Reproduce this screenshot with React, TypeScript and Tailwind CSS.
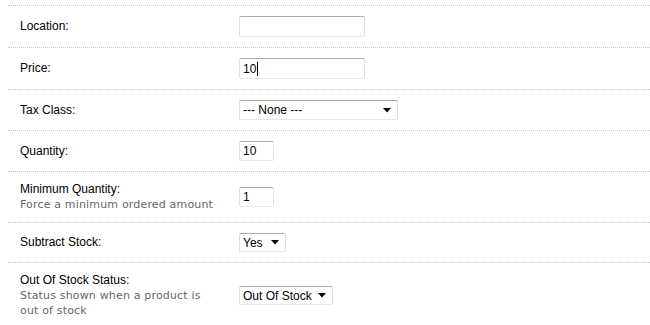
import { ReactNode } from "react";

const inputCls =
  "border border-t-[#abadb3] border-x-[#dbdfe6] border-b-[#e3e9ef] rounded-[2px] bg-white px-[3px] flex items-center text-[12px] text-black";

function Arrow() {
  return (
    <svg width="8" height="5" viewBox="0 0 8 5" className="shrink-0">
      <path d="M0 0H8L4 4.5Z" fill="#000" />
    </svg>
  );
}

function FakeSelect({ value, cls }: { value: string; cls: string }) {
  return (
    <div className={`${inputCls} ${cls} justify-between pr-[6px]`}>
      <span>{value}</span>
      <Arrow />
    </div>
  );
}

function Row({ label, help, children }: { label: string; help?: string; children: ReactNode }) {
  return (
    <div className="flex items-center border-b border-dotted border-[#c8c8c8]">
      <div className="w-[231px] shrink-0 pl-[12px] pr-[20px] py-[10px]">
        <div className="text-[12px] leading-[15px] text-black">{label}</div>
        {help && (
          <div className="font-['DejaVu_Sans',Verdana,sans-serif] text-[11px] leading-[15px] tracking-[0.17px] text-[#666]">
            {help}
          </div>
        )}
      </div>
      <div className="py-[10px]">{children}</div>
    </div>
  );
}

export default function App() {
  return (
    <div className="bg-white w-[650px] h-[325px] overflow-hidden pt-[5px] font-['Liberation_Sans',Arial,sans-serif]">
      <div className="ml-[8px] border-t border-dotted border-[#c8c8c8]">
        <Row label="Location:">
          <div className={`${inputCls} w-[126px] h-[21px]`} />
        </Row>
        <Row label="Price:">
          <div className={`${inputCls} w-[126px] h-[21px]`}>
            10<span className="inline-block w-px h-[14px] bg-black ml-px" />
          </div>
        </Row>
        <Row label="Tax Class:">
          <FakeSelect value="--- None ---" cls="w-[159px] h-[20px]" />
        </Row>
        <Row label="Quantity:">
          <div className={`${inputCls} w-[35px] h-[20px]`}>10</div>
        </Row>
        <Row label="Minimum Quantity:" help="Force a minimum ordered amount">
          <div className={`${inputCls} w-[35px] h-[20px]`}>1</div>
        </Row>
        <Row label="Subtract Stock:">
          <FakeSelect value="Yes" cls="w-[47px] h-[19px]" />
        </Row>
        <Row label="Out Of Stock Status:" help="Status shown when a product is out of stock">
          <FakeSelect value="Out Of Stock" cls="w-[94px] h-[19px]" />
        </Row>
      </div>
    </div>
  );
}
